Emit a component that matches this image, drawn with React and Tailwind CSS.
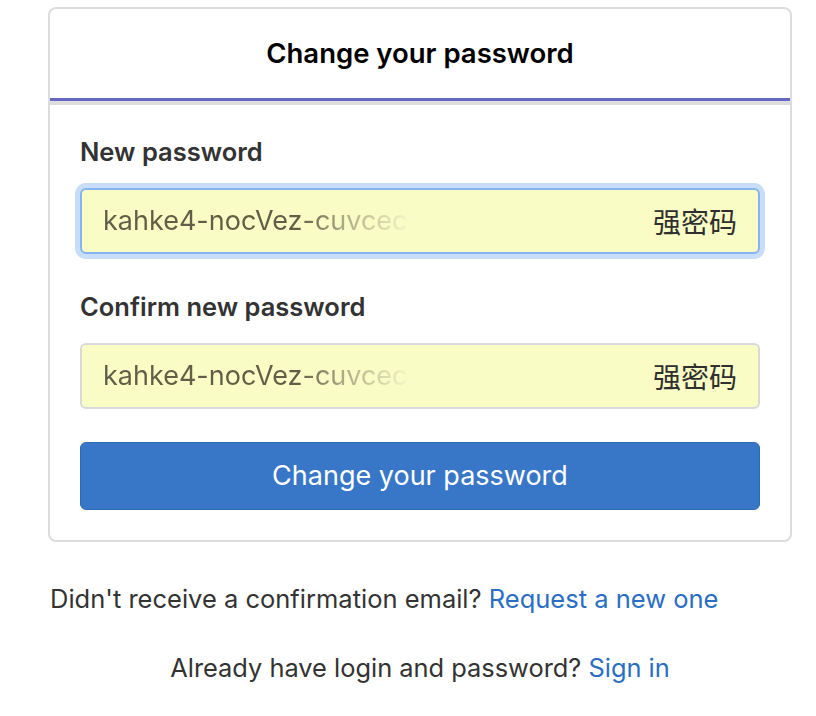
import React from "react";

function PwInput({ focused }) {
  return (
    <div
      className={`flex items-center h-[66px] rounded-[6px] bg-[#f9fcc4] px-[21px] ${
        focused
          ? "border-2 border-[#86b3f0] shadow-[0_0_0_5px_#c8ddfa]"
          : "border-2 border-[#d9d9d9]"
      }`}
    >
      <span
        className="text-[27px] flex-1 bg-clip-text text-transparent leading-[34px]"
        style={{
          backgroundImage:
            "linear-gradient(to right, #5f5f47 0px, #5f5f47 195px, #a9ab84 240px, #eef0c0 300px, #f9fcc4 320px)",
        }}
      >
        kahke4-nocVez-cuvcec
      </span>
      <span className="text-[28px] leading-[34px] text-[#2f2f2f] font-['Noto_Sans_CJK_SC',sans-serif]">强密码</span>
    </div>
  );
}

export default function App() {
  return (
    <div className="w-[816px] h-[716px] bg-white font-['Inter',sans-serif] text-[#333] pt-[7px] px-[48px]">
      <div className="w-[744px] border-2 border-[#dcdcdc] rounded-[8px] overflow-hidden">
        <div className="h-[89px] flex items-center justify-center text-[27.5px] font-semibold text-black">
          Change your password
        </div>
        <div className="h-[3px] bg-[#6567c3]" />
        <div className="h-[4px] bg-[#dddddd]" />
        <div className="px-[30px] pt-[32px] pb-[30px]">
          <div className="text-[25.5px] font-semibold text-[#333] mb-[21px] leading-[30px]">New password</div>
          <PwInput focused />
          <div className="text-[25.5px] font-semibold text-[#333] mt-[38px] mb-[21px] leading-[30px]">Confirm new password</div>
          <PwInput />
          <button className="mt-[33px] w-full h-[68px] rounded-[6px] bg-[#3877c8] border border-[#2e69b6] text-white text-[27px]">
            Change your password
          </button>
        </div>
      </div>
      <div className="w-[744px] mt-[41px] text-[25.5px] leading-[32px] pl-[2px] whitespace-nowrap">
        Didn't receive a confirmation email? <span className="text-[#2a6ec4]">Request a new one</span>
      </div>
      <div className="w-[744px] mt-[37px] text-[25.4px] leading-[32px] text-center whitespace-nowrap">
        Already have login and password? <span className="text-[#2a6ec4]">Sign in</span>
      </div>
    </div>
  );
}
